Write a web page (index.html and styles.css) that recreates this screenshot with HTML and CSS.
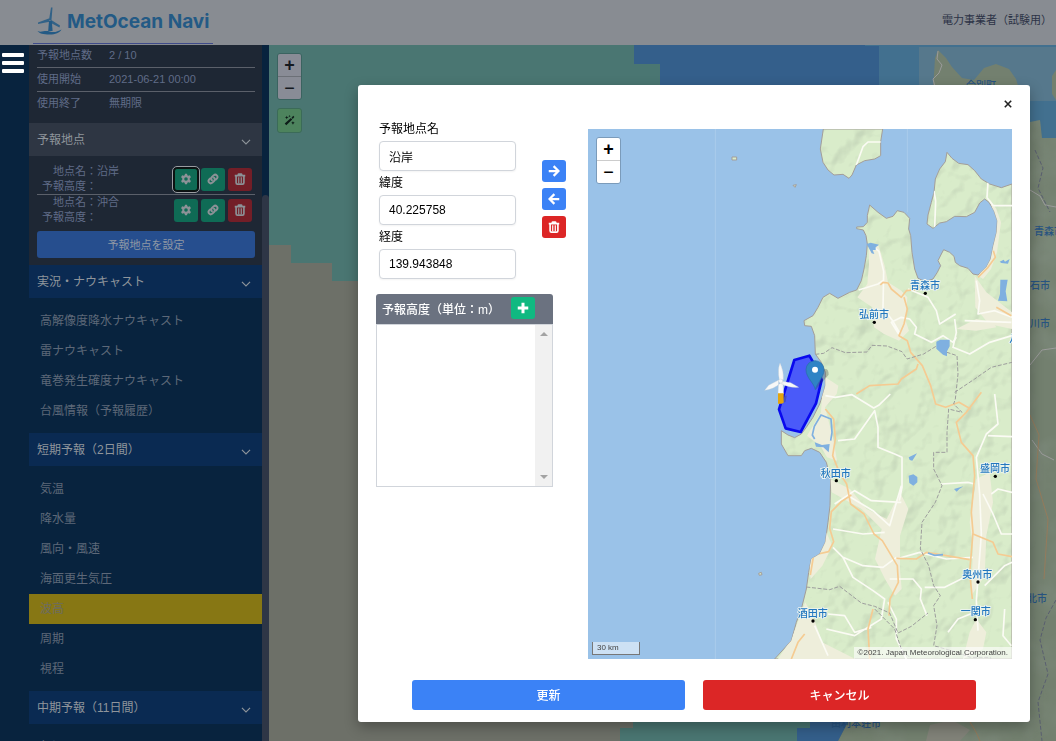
FILE: index.html
```html
<!doctype html>
<html lang="ja">
<head>
    <meta charset="UTF-8">
    <meta name="viewport" content="width=device-width, initial-scale=1.0">
    <title>MetOcean Navi</title>
    <link rel="stylesheet" href="styles.css">
</head>
<body>
    <!-- shared icons -->
    <svg class="sprite" aria-hidden="true">
        <symbol id="gear" viewBox="0 0 16 16"><path fill="currentColor" fill-rule="evenodd" d="M6.600 1h2.800l.4 2 1.400.8 2-.7 1.400 2.400L13 6.900v2.200l1.600 1.400-1.400 2.400-2-.7-1.400.8-.4 2H6.600l-.4-2-1.400-.8-2 .7-1.400-2.400L3 9.100V6.900L1.400 5.500l1.400-2.400 2 .7L6.200 3zM8 5.600a2.400 2.400 0 1 0 0 4.800 2.400 2.400 0 0 0 0-4.800z"/></symbol>
        <symbol id="link" viewBox="0 0 16 16"><g fill="none" stroke="currentColor" stroke-width="2.600" stroke-linecap="round"><path d="M6.600 9.600a3 3 0 0 1 0-4.200l2.500-2.500a3 3 0 0 1 4.200 4.200l-1.500 1.500"/><path d="M9.400 6.400a3 3 0 0 1 0 4.200l-2.500 2.500a3 3 0 0 1-4.200-4.200l1.500-1.500"/></g></symbol>
        <symbol id="trash" viewBox="0 0 16 16"><path fill="none" stroke="currentColor" stroke-width="2.200" stroke-linejoin="round" d="M1 3.500h14M5.500 3l.5-1.700h4l.5 1.700M2.800 4.500V13a1.800 1.800 0 0 0 1.800 1.800h6.800a1.800 1.800 0 0 0 1.800-1.800V4.500"/><path stroke="currentColor" stroke-width="1.600" d="M6.300 5.500v8M9.700 5.500v8"/></symbol>
        <symbol id="arrow" viewBox="0 0 16 16"><path fill="none" stroke="currentColor" stroke-width="3" d="M1 8h12.500M7.500 1.500L14 8l-6.500 6.500"/></symbol>
        <symbol id="plus" viewBox="0 0 16 16"><path stroke="currentColor" stroke-width="4" d="M8 1v14M1 8h14"/></symbol>
        <symbol id="chevron" viewBox="0 0 16 16"><path fill="none" stroke="currentColor" stroke-width="1.800" d="M1.500 4.500L8 11l6.500-6.500"/></symbol>
        <symbol id="wand" viewBox="0 0 16 16"><path fill="currentColor" d="M1 12.500L10 4.500l2 2.200L3.300 15zM11 3.600L13.600 1.200l1.400 1.600-2.300 2.900zM4 1l.8 1.900 2 .7-2 .8L4 6.300l-.8-1.900-2-.8 2-.7zM13 9l.8 1.700 1.700.7-1.700.8L13 14l-.8-1.800-1.700-.8 1.700-.7zM8 0l.5 1.200 1.200.5-1.200.5L8 3.400l-.5-1.200-1.200-.5 1.200-.5z"/></symbol>
    </svg>

    <header class="topbar">
        <a class="logo" href="#">
            <svg class="logo-mark" viewBox="0 0 26 28" aria-hidden="true">
                <path d="M12 13l2-12.500h1.500L14.500 13zM12.500 14.800L1 17v-1.500l11.500-4.200zM13.500 12.500l9.500 6-.5 2-9.500-5z" opacity=".85"/>
                <path d="M12 14h2.800l.8 10h-4.400z"/>
                <path d="M.5 24c4 2 7-1 12 .5s8 0 12-2c-2 3.500-6 5-12 5S2 26.500.5 24z"/>
            </svg>
            <span>MetOcean Navi</span>
        </a>
        <span class="user">電力事業者（試験用）</span>
    </header>

    <main class="app">
        <div class="rail">
            <button class="burger" aria-label="メニュー"><span></span><span></span><span></span></button>
        </div>

        <aside class="sidebar">
            <dl class="info">
                <div><dt>予報地点数</dt><dd>2 / 10</dd></div>
                <div><dt>使用開始</dt><dd>2021-06-21 00:00</dd></div>
                <div><dt>使用終了</dt><dd>無期限</dd></div>
            </dl>
            <button class="section section-gray">予報地点<svg><use href="#chevron"/></svg></button>
            <div class="points">
                <div class="point">
                    <dl><dt>地点名：</dt><dd>沿岸</dd><dt>予報高度：</dt><dd></dd></dl>
                    <button class="icon-btn focused" aria-label="設定"><svg><use href="#gear"/></svg></button>
                    <button class="icon-btn" aria-label="リンク"><svg><use href="#link"/></svg></button>
                    <button class="icon-btn danger" aria-label="削除"><svg><use href="#trash"/></svg></button>
                </div>
                <div class="point">
                    <dl><dt>地点名：</dt><dd>沖合</dd><dt>予報高度：</dt><dd></dd></dl>
                    <button class="icon-btn" aria-label="設定"><svg><use href="#gear"/></svg></button>
                    <button class="icon-btn" aria-label="リンク"><svg><use href="#link"/></svg></button>
                    <button class="icon-btn danger" aria-label="削除"><svg><use href="#trash"/></svg></button>
                </div>
                <button class="set-points">予報地点を設定</button>
            </div>
            <button class="section">実況・ナウキャスト<svg><use href="#chevron"/></svg></button>
            <nav class="menu">
                <a href="#">高解像度降水ナウキャスト</a>
                <a href="#">雷ナウキャスト</a>
                <a href="#">竜巻発生確度ナウキャスト</a>
                <a href="#">台風情報（予報履歴）</a>
            </nav>
            <button class="section">短期予報（2日間）<svg><use href="#chevron"/></svg></button>
            <nav class="menu">
                <a href="#">気温</a>
                <a href="#">降水量</a>
                <a href="#">風向・風速</a>
                <a href="#">海面更生気圧</a>
                <a href="#" class="active">波高</a>
                <a href="#">周期</a>
                <a href="#">視程</a>
            </nav>
            <button class="section">中期予報（11日間）<svg><use href="#chevron"/></svg></button>
            <nav class="menu">
                <a href="#">気温</a>
            </nav>
        </aside>
        <div class="scrollbar"><span></span></div>

        <div class="main-map">
            <svg class="map-canvas" viewBox="269 45 787 696" preserveAspectRatio="xMinYMin slice" aria-hidden="true">
                <defs>
                    <filter id="relief-dim" x="0" y="0" width="1" height="1">
                        <feTurbulence type="fractalNoise" baseFrequency=".03" numOctaves="3" seed="8"/>
                        <feColorMatrix values="0 0 0 0 .28  0 0 0 0 .34  0 0 0 0 .30  2.200 0 0 0 -.85"/>
                    </filter>
                    <clipPath id="dim-land"><path d="M1030 122l10-2 2 18h14v603H838l10-19h182z"/></clipPath>
                </defs>
                <path fill="#6d7068" d="M269 45h787v696H269z"/>
                <path fill="#4a7672" d="M269 45h365v19h26v41h-30v176H332v-18h-41v-18h-22z"/>
                <path fill="#345f8b" d="M634 45h245v60H660V64h-26z"/>
                <path fill="#42708f" d="M865 45h191v60H879V46h-14z"/>
                <path fill="#56788c" d="M919 47h137v54H919z"/>
                <path fill="#42708f" d="M1030 101h26v38h-26z"/>
                <path fill="#73806f" d="M933 90l2-32 3-8 8 8 6 9 10 11 12 2 10-12 12-4 13 5 7 10 3 10v4zM1056 70l-4 6v18l4 6zM1030 122l10-2 2 18h14v603H838l10-19h182z"/>
                <g clip-path="url(#dim-land)"><path filter="url(#relief-dim)" opacity=".25" d="M838 120h218v621H838z"/></g>
                <path fill="none" stroke="#9b9b9b" stroke-width="1" d="M938 51l-1 8 5 6-3 8-6 6 2 8M1030 190l10 6 5 9 11 2M1030 365l12-15 14-2M1032 440l10 14 12 6"/>
                <path fill="none" stroke="#957b5c" stroke-width="1" d="M1030 415l9 20-3 44 12 40-4 60M970 722l6 10 4 9"/>
                <path fill="none" stroke="#5a5f70" stroke-dasharray="4 2" d="M1056 600l-10 18-6 22 8 34-10 28 4 39M1035 150l8 18-5 20 12 24"/>
                <path fill="#828379" d="M930 725l22-5 18 10-10 11h-34z"/>
                <path fill="#4a7672" d="M633 722h177v6h-13v13H620v-13h13z"/>
                <path fill="#345f8b" d="M810 722h38l-10 19h-41v-13h13z"/>
                <g class="dim-labels">
                    <text x="966" y="89">今別町</text>
                    <text x="1034" y="235">青森市</text>
                    <text x="1030" y="289">石市</text>
                    <text x="1030" y="327">川市</text>
                    <text x="1027" y="602">北市</text>
                    <text x="831" y="727">由利本荘市</text>
                </g>
            </svg>
            <div class="map-tools dim">
                <div class="zoom-ctrl"><button aria-label="拡大">+</button><button aria-label="縮小">−</button></div>
                <button class="wand" aria-label="描画"><svg><use href="#wand"/></svg></button>
            </div>
        </div>
    </main>

    <div class="overlay">
        <section class="modal" role="dialog" aria-label="予報地点の編集">
            <div class="modal-top">
                <button class="close" aria-label="閉じる"><svg viewBox="0 0 10 10"><path d="M1 1l8 8M9 1L1 9"/></svg></button>
            </div>
            <div class="modal-body">
                <div class="left">
                    <div class="edit">
                        <form class="fields">
                            <label for="name">予報地点名</label>
                            <input id="name" type="text" value="沿岸">
                            <label for="lat">緯度</label>
                            <input id="lat" type="text" value="40.225758">
                            <label for="lng">経度</label>
                            <input id="lng" type="text" value="139.943848">
                        </form>
                        <div class="actions">
                            <button class="icon-btn blue" aria-label="地図へ"><svg><use href="#arrow"/></svg></button>
                            <button class="icon-btn blue back" aria-label="地図から"><svg><use href="#arrow"/></svg></button>
                            <button class="icon-btn red" aria-label="削除"><svg><use href="#trash"/></svg></button>
                        </div>
                    </div>
                    <div class="heights">
                        <div class="heights-head">
                            <span>予報高度（単位：m）</span>
                            <button class="icon-btn green" aria-label="追加"><svg><use href="#plus"/></svg></button>
                        </div>
                        <div class="heights-body">
                            <div class="track"><i class="up"></i><i class="down"></i></div>
                        </div>
                    </div>
                </div>

                <div class="mini-map">
                    <svg class="map-canvas" viewBox="0 0 1272 1590" preserveAspectRatio="xMidYMid slice" aria-hidden="true">
                        <defs>
                            <filter id="relief" x="0" y="0" width="1" height="1">
                                <feTurbulence type="fractalNoise" baseFrequency=".012" numOctaves="3" seed="5" result="n"/>
                                <feDiffuseLighting in="n" surfaceScale="26" lighting-color="#fff" result="l"><feDistantLight azimuth="225" elevation="52"/></feDiffuseLighting>
                                <feColorMatrix in="l" values="0 0 0 0 .42  0 0 0 0 .5  0 0 0 0 .38  -1.600 0 0 0 1.200"/>
                            </filter>
                            <path id="honshu" d="M1272 165L1240 176 1205 165 1180 150 1160 125 1140 107 1112 103 1092 88 1077 70 1072 98 1055 120 1042 150 1038 190 1030 220 1020 258 1017 285 1035 298 1055 282 1075 278 1100 262 1135 263 1160 250 1175 222 1190 210 1203 220 1218 245 1228 275 1226 310 1216 350 1208 390 1195 415 1170 438 1155 435 1140 418 1115 410 1102 400 1098 382 1085 370 1067 362 1060 375 1050 395 1058 410 1048 430 1035 450 1012 458 990 448 980 420 972 370 968 320 962 300 965 268 948 250 928 245 915 262 895 268 870 250 845 228 838 260 838 280 826 293 806 294 806 299 826 303 834 320 838 345 835 380 828 420 820 455 806 483 785 490 750 508 725 493 705 505 690 535 675 560 648 575 650 590 670 592 680 620 682 675 700 700 712 730 712 770 705 795 695 825 675 865 655 895 640 915 620 926 600 918 580 905 580 945 600 980 640 980 650 965 670 958 695 970 715 1000 728 1050 726 1130 720 1180 712 1240 695 1275 670 1290 662 1330 655 1380 640 1440 625 1480 610 1535 560 1590H1272z"/>
                            <path id="hokkaido" d="M706 0L697 60 705 100 720 123 738 138 765 136 783 148 792 138 805 108 830 95 860 90 878 80V38L884 0z"/>
                            <clipPath id="land"><use href="#honshu"/><use href="#hokkaido"/></clipPath>
                        </defs>
                        <path fill="#9ac2e8" d="M0 0h1272v1590H0z"/>
                        <g fill="#d9ecca" stroke="#a39d99" stroke-width="3">
                            <use href="#honshu"/>
                            <use href="#hokkaido"/>
                            <path d="M432 84h14v9h-14zM615 169l10-2-4 8zM512 1333l8-3 2 7-8 2z"/>
                        </g>
                        <g clip-path="url(#land)">
                            <path filter="url(#relief)" opacity=".42" d="M540 0h732v1590H540z"/>
                            <!-- plains -->
                            <g fill="#eeeedb">
                                <path d="M842 350l30 0 18 60 10 50 40 25 18 20-5 70 10 30-30 30-45-20-30-20-5-60-45-30 30-40 5-60z"/>
                                <path d="M1205 210l20 30 14 40-12 90-18 50-24 30-14-10 24-40 14-60 8-80z"/>
                                <path d="M1160 440l35 50 77 60v50l-70-15-40-50z"/>
                                <path d="M706 740l45 30-5 25-35 40 26 100 10 60-30-10-20-35-40-30 42-70z"/>
                                <path d="M726 1050l60 30 50 60 60 30 40-80 25 50-25 80 0 100 5 60-20 20-30-50-30-60 20-90-60-60-90-50z"/>
                                <path d="M715 1210l18 40-30 60-35 40-5-50z"/>
                                <path d="M652 1420l30 60 20 60 100 50H570l40-60z"/>
                                <path d="M1165 1050l40-20 10 90-20 100-5 120-40 60 5-150-10-70zM1165 1470l30 40-10 50-60 30 20-80z"/>
                                <path d="M1105 600l60-30 50 10 10 15-60 10z"/>
                            </g>
                            <!-- local roads -->
                            <g fill="none" stroke="#fbfbf4" stroke-width="5" stroke-linejoin="round">
                                <path d="M805 108l20-55 15-14h40M845 345l28 22 14 60-2 110 30 40 20 35M812 483l58-18 18-12M932 615l-22-35 30-15 25 5 20 25-5 20 50 25 35-20 30 20 10-15"/>
                                <path d="M1040 296l3-80-5-30M1200 160l-3 45M1196 205l20 25 56 0M1165 455l10 60-5 40 50-10 52 20M1130 575l140 5M960 480l60 25 25 40 10 40 48-30M1100 570l5 40-10 45 50 20 60-35 67-20"/>
                                <path d="M712 800l30 5 50-8 65 40 15-8 35-34M750 935l50-5 60-85 10 50 0 60 50 20 22 10v90l-8 40M740 1125l60-40 50 30 90 5M780 1100l75 45 50 45 35-120M735 1200l90 15 65-5"/>
                                <path d="M735 1255l30 30 30 60 60 40 35 25-10 60-80 50-85-20M765 1285l60 25 60 5 40-30M925 1290l70-20 80 20 80-5M905 1350l70 0 25 30-3 30 20 50M1010 1375l60 0 60-30 30-20M900 1420l25 50 0 60 30 60M720 1455l50 5 30 50 50-15M680 1490l40 90M1190 1370l60-60 22-10"/>
                                <path d="M1220 795l10 90-35 30-30 70 10 110 5 120-15 200 5 90M1060 1065l80-5 20 5M1185 1095l30 60 25 60 32 0M1210 1095l20-15 42 10M1200 920l72 3M1250 1440l-5 80 25 30M1160 1450l-50 20-30 40"/>
                            </g>
                            <!-- highways -->
                            <g fill="none" stroke="#f5cb92" stroke-width="5" stroke-linejoin="round">
                                <path d="M1000 480l-45 5-15 20-30-25-10-18-15-2-8 8M948 505l10 35-10 45-15 35 25 15 10 35 35 40 25 60 15 55 30 10 40-15 35 20M1216 365l6 20-22 30-30 30M1180 790l-45 60-30 30 15 60 35 40 5 60-10 110 5 60-10 120 8 80"/>
                                <path d="M805 795l40-25 85-5 10-15 45-30 5-15M712 840l25 30 5 60-8 50 20 50 22 35 12 60 40 30 30 60 25 20 45 75 3 50-25 50-3 50M790 1098l-30 20-30 30-5 50 12 40-15 30-45 10-10 60M925 1288l60 2 30-20 60 10 70 12M1155 1215l60 25 15 35 42 8M610 1590l20-50 20-25M855 1440l-15 60 5 90M1225 535l45 25"/>
                            </g>
                            <!-- prefecture borders -->
                            <g fill="none" stroke="#9d9d9d" stroke-width="3" stroke-dasharray="12 5">
                                <path d="M682 676l25-3 25-17 40 15 65-2 15-20 45 2 45 17 15 22 50-15 40-25 30 20 30 10 3 55-8 75-5 15 25 25-40-10-5 70 0 60-40 0 0 50 25 50-20 50-40 60-5 80 25 50 15 60 20 30-20 30 10 60-10 60 70 20 40 15 60 0 15 40-25 40 40 30"/>
                                <path d="M655 1374l70 8 30-10 65 50 40 10 45 20 25 60 40-20 50-40M1100 790l60-40 50-35 62-15M860 1440l60 60 20 60 30 30"/>
                            </g>
                        </g>
                        <!-- lakes -->
                        <g fill="#7fb0e0">
                            <path d="M836 345l12-4 25 6-10 8 0 8-9 0 5 12-8-2zM1237 452l22 0-6 35 5 30-28-2 6-20zM1045 638l12-6 28 0 0 20-8 15 0 15-12-5-20-18zM680 940l22 8 23-3-3 25-16-15-22-2zM962 1040l14-4 12 8v16l-12 10-12-8zM1098 1080l28-8-12 8-8 8zM962 985l25-12-14 22-8-2zM1235 398l12-6 4 6 14-8-5 14-20-2z"/>
                        </g>
                        <path fill="none" stroke="#7fb0e0" stroke-width="5" d="M680 930l-7-12 6-26 20-34 30 12 3 40-4 25M1020 1272l20 7 25-2"/>
                        <path stroke="#b2d1ed" stroke-width="2" d="M382 0v1590M958 0v250"/>
                        <!-- site area, turbine, pin -->
                        <path fill="#2b32ff" fill-opacity=".72" stroke="#0909ee" stroke-width="8" stroke-linejoin="round" d="M619 693l45-13 28 48 9 25-17 70-46 86-45-11-20-57z"/>
                        <path fill="#333" opacity=".28" d="M682 783l40-46q0-22-16-15zM587 800h9l-3 18-8 5z"/>
                        <g fill="#f7f8f8" stroke="#c9ced2" stroke-width="1">
                            <path d="M572 755h12l3 40h-17zM574 752q-6-30 2-50 12 25 10 50zM572 753l-30 16-12 15q25-2 48-22zM582 757l26 4 24 14q-28 2-52-10z"/>
                            <circle cx="578" cy="756" r="6"/>
                        </g>
                        <path fill="#e5a50c" d="M570 793h17v28l-6 3h-11z"/>
                        <path fill="#2f83c5" stroke="#276ea5" stroke-width="2" d="M682 782c-4-20-28-36-28-60a27 27 0 0 1 54 0c0 24-22 40-26 60z"/>
                        <circle cx="681" cy="722" r="9" fill="#fff"/>
                        <g class="city-labels">
                            <text x="966" y="479">青森市</text>
                            <text x="813" y="568">弘前市</text>
                            <text x="698" y="1044">秋田市</text>
                            <text x="1176" y="1029">盛岡市</text>
                            <text x="1123" y="1346">奥州市</text>
                            <text x="1118" y="1459">一関市</text>
                            <text x="629" y="1464">酒田市</text>
                            <text x="1264" y="640">八戸市</text>
                        </g>
                        <g>
                            <circle cx="1012" cy="493" r="5"/><circle cx="859" cy="580" r="5"/>
                            <circle cx="745" cy="1055" r="5"/><circle cx="1222" cy="1042" r="5"/>
                            <circle cx="1170" cy="1359" r="5"/><circle cx="1162" cy="1472" r="5"/>
                            <circle cx="675" cy="1476" r="5"/>
                        </g>
                    </svg>
                    <div class="map-tools">
                        <div class="zoom-ctrl"><button aria-label="拡大">+</button><button aria-label="縮小">−</button></div>
                    </div>
                    <span class="scale">30 km</span>
                    <span class="credit">©2021. Japan Meteorological Corporation.</span>
                </div>
            </div>
            <div class="modal-foot">
                <button class="wide blue">更新</button>
                <button class="wide red">キャンセル</button>
            </div>
        </section>
    </div>
</body>
</html>
```

FILE: styles.css
```css
* {
    box-sizing: border-box;
}
body {
    display: flex;
    flex-direction: column;
    height: 100vh;
    margin: 0;
    overflow: hidden;
    background: #08233e;
    font-family: "Liberation Sans", Arial, "Noto Sans CJK JP", sans-serif;
    font-size: 12px;
}
button, input {
    font: inherit;
    margin: 0;
}
button {
    border: 0;
    padding: 0;
    cursor: pointer;
}
dl, dd {
    margin: 0;
}
a {
    text-decoration: none;
}
.sprite {
    position: absolute;
    width: 0;
    height: 0;
}

/* header */
.topbar {
    display: flex;
    justify-content: space-between;
    flex: none;
    height: 45px;
    padding: 0 4px 0 33px;
    background: #888c92;
}
.logo {
    display: flex;
    align-items: center;
    gap: 4px;
    width: 180px;
    height: 44px;
    padding: 0 0 1px 4px;
    border-bottom: 1px solid #3f4b8a;
    color: #235a85;
    font-family: Inter, sans-serif;
    font-size: 19px;
    font-weight: 700;
    white-space: nowrap;
}
.logo-mark {
    flex: none;
    width: 26px;
    height: 28px;
    fill: #235a85;
}
.user {
    line-height: 40px;
    font-size: 11px;
    color: #2c3346;
}

/* sidebar */
.app {
    display: flex;
    flex: 1;
    min-height: 0;
}
.rail {
    width: 29px;
    padding: 8px 2px;
}
.burger {
    display: flex;
    flex-direction: column;
    gap: 4px;
    width: 22px;
    background: none;
}
.burger span {
    height: 4px;
    width: 100%;
    background: #fff;
    border-radius: 1px;
}
.sidebar {
    width: 233px;
    flex: none;
    overflow: hidden;
    color: #68718a;
}
.info {
    margin-top: -1px;
    padding: 0 7px 8px 8px;
    background: #1e2734;
    font-size: 11px;
    color: #606c88;
}
.info div {
    display: flex;
    line-height: 23px;
    border-bottom: 1px solid #5b606a;
}
.info div:last-child {
    border-bottom: 0;
}
.info dt {
    width: 72px;
}
.section {
    display: flex;
    justify-content: space-between;
    align-items: center;
    width: 100%;
    height: 33px;
    padding: 0 11px 2px 8px;
    background: #0a2a52;
    color: #8f959b;
    text-align: left;
}
.section-gray {
    background: #2e3643;
}
.section svg {
    width: 10px;
    height: 10px;
    margin-top: 6px;
}
.points {
    padding: 8px 7px 7px 8px;
    background: #1e2734;
    font-size: 11px;
    color: #606c88;
}
.point {
    display: flex;
    align-items: center;
    gap: 3px;
    padding-right: 3px;
    line-height: 15px;
}
.point + .point {
    border-top: 1px solid #5b606a;
}
.point dl {
    display: grid;
    grid-template-columns: 60px 1fr;
    grid-auto-rows: 15px;
    flex: 1;
}
.point dt {
    text-align: right;
}
.icon-btn {
    display: flex;
    align-items: center;
    justify-content: center;
    width: 24px;
    height: 23px;
    border-radius: 3px;
    background: #0f6b55;
    color: #8c9297;
}
.icon-btn svg {
    width: 12px;
    height: 12px;
}
.danger {
    background: #731e27;
}
.focused {
    border: 1px solid #0b1510;
    outline: 1px solid #9a9da1;
    outline-offset: 1px;
    box-shadow: 0 0 0 1px #0b0f14;
}
.set-points {
    width: 100%;
    height: 27px;
    margin-top: 6px;
    padding-bottom: 2px;
    border-radius: 3px;
    background: #264e8e;
    color: #8f98a5;
    font-size: 11px;
}
.menu {
    display: flex;
    flex-direction: column;
    padding: 8px 0 7px;
}
.menu a {
    height: 30px;
    padding-left: 11px;
    line-height: 30px;
    color: #5d6878;
}
.menu .active {
    background: #877714;
    color: #6c6c60;
}
.scrollbar {
    width: 7px;
    padding-top: 150px;
}
.scrollbar span {
    display: block;
    height: 100%;
    border-radius: 4px 4px 0 0;
    background: #2e3646;
}

/* maps */
.main-map {
    position: relative;
    flex: 1;
    overflow: hidden;
}
.map-canvas {
    display: block;
    width: 100%;
    height: 100%;
}
.dim-labels {
    font-family: "Noto Sans CJK JP", sans-serif;
    font-size: 10px;
    font-weight: 500;
    fill: #275381;
}
.city-labels {
    font-family: "Noto Sans CJK JP", sans-serif;
    font-size: 30px;
    font-weight: 500;
    fill: #2277be;
    stroke: #eef5f2;
    stroke-width: 5px;
    paint-order: stroke;
}
.map-tools {
    position: absolute;
    top: 8px;
    left: 8px;
}
.zoom-ctrl {
    display: flex;
    flex-direction: column;
    width: 25px;
    border: 1px solid #7b9bba;
    border-radius: 3px;
    overflow: hidden;
}
.zoom-ctrl button {
    height: 22px;
    background: #fff;
    color: #000;
    font-size: 18px;
    font-weight: 700;
    line-height: 22px;
}
.zoom-ctrl button + button {
    height: 23px;
    border-top: 1px solid #ccc;
    font-weight: 400;
}
.dim .zoom-ctrl {
    border-color: #3b6360;
}
.dim .zoom-ctrl button {
    background: #898c96;
    color: #14191f;
}
.dim .zoom-ctrl button + button {
    border-color: #6c7077;
}
.wand {
    display: flex;
    align-items: center;
    justify-content: center;
    width: 25px;
    height: 25px;
    margin-top: 8px;
    border: 1px solid #3b6b58;
    border-radius: 3px;
    background: #4d835d;
    color: #0d1c18;
}
.wand svg {
    width: 11px;
    height: 11px;
}

/* dialog */
.overlay {
    position: fixed;
    inset: 0;
    display: flex;
    justify-content: flex-end;
    align-items: flex-start;
    padding: 85px 26px 0;
    pointer-events: none;
}
.modal {
    width: 100%;
    max-width: 672px;
    padding: 0 18px 12px;
    border-radius: 3px;
    background: #fff;
    box-shadow: 0 5px 14px rgba(0, 0, 0, 0.3);
    pointer-events: auto;
}
.modal-top {
    display: flex;
    justify-content: flex-end;
    align-items: center;
    height: 32px;
    padding-top: 6px;
}
.close {
    display: flex;
    background: none;
}
.close svg {
    width: 8px;
    height: 8px;
    fill: none;
    stroke: #222;
    stroke-width: 2;
}
.modal-body {
    display: grid;
    grid-template-columns: 1fr 2fr;
}
.edit {
    display: flex;
    gap: 26px;
}
.fields {
    display: flex;
    flex-direction: column;
    width: 140px;
    padding-left: 3px;
}
.fields label {
    line-height: 24px;
}
.fields input {
    width: 100%;
    height: 30px;
    padding: 0 9px;
    border: 1px solid #d1d5db;
    border-radius: 4px;
    box-shadow: 0 1px 2px rgba(0, 0, 0, 0.05);
    color: #000;
}
.actions {
    display: flex;
    flex-direction: column;
    gap: 6px;
    padding-top: 43px;
}
.actions .icon-btn, .heights .icon-btn {
    height: 22px;
    color: #fff;
}
.back svg {
    transform: scaleX(-1);
}
.blue {
    background: #3b82f6;
}
.red {
    background: #dc2626;
}
.green {
    background: #10b981;
}
.heights {
    width: 177px;
    margin-top: 15px;
}
.heights-head {
    display: flex;
    align-items: center;
    justify-content: space-between;
    height: 30px;
    padding: 0 18px 2px 6px;
    border-radius: 3px 3px 0 0;
    background: #6b7280;
    color: #fff;
    font-weight: 500;
    font-family: "Liberation Sans", "Noto Sans CJK JP", sans-serif;
}
.heights-body {
    display: flex;
    justify-content: flex-end;
    height: 163px;
    border: 1px solid #d1d5db;
}
.track {
    display: flex;
    flex-direction: column;
    justify-content: space-between;
    align-items: center;
    width: 17px;
    padding: 7px 0;
    background: #f1f1f1;
}
.track i {
    border: 4px solid transparent;
}
.track .up {
    border-top: 0;
    border-bottom-color: #a3a3a3;
}
.track .down {
    border-bottom: 0;
    border-top-color: #a3a3a3;
}
.mini-map {
    position: relative;
    height: 530px;
    margin-top: 12px;
    overflow: hidden;
}
.scale, .credit {
    position: absolute;
    font-size: 8px;
    line-height: 12px;
    color: #444;
    background: rgba(255, 255, 255, 0.6);
}
.scale {
    left: 4px;
    bottom: 4px;
    width: 48px;
    padding-left: 4px;
    border: 1px solid #777;
    border-top: 0;
    background: rgba(255, 255, 255, 0.5);
}
.credit {
    right: 0;
    bottom: 0;
    padding: 0 4px;
}
.modal-foot {
    display: flex;
    gap: 18px;
    padding: 21px 36px 0;
}
.wide {
    flex: 1;
    height: 30px;
    padding-bottom: 2px;
    border-radius: 3px;
    color: #fff;
    font-family: "Noto Sans CJK JP", sans-serif;
    font-weight: 500;
}
```
